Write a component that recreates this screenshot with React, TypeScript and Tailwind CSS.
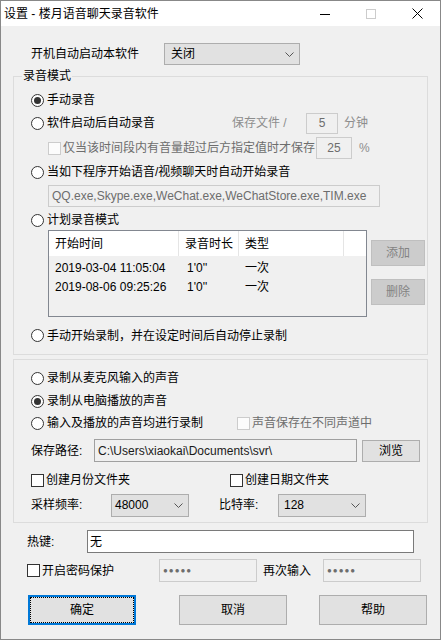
import React from "react";

type RadioProps = { checked?: boolean; label: string; className?: string };

function Radio({ checked, label, className = "" }: RadioProps) {
  return (
    <div className={`flex items-center shrink-0 ${className}`}>
      <span className="flex h-[13px] w-[13px] items-center justify-center rounded-full border border-[#333333] bg-white">
        {checked && <span className="h-[7px] w-[7px] rounded-full bg-[#333333]" />}
      </span>
      <span className="ml-[3px] whitespace-nowrap">{label}</span>
    </div>
  );
}

function Check({ label, disabled, className = "" }: { label: string; disabled?: boolean; className?: string }) {
  return (
    <div className={`flex items-center shrink-0 ${className}`}>
      <span
        className={`h-[13px] w-[13px] border ${disabled ? "border-[#cccccc] bg-[#fcfcfc]" : "border-[#333333] bg-white"}`}
      />
      <span className={`ml-[2px] whitespace-nowrap ${disabled ? "text-[#6d6d6d]" : ""}`}>{label}</span>
    </div>
  );
}

function Combo({ value, className = "" }: { value: string; className?: string }) {
  return (
    <div className={`flex shrink-0 items-center justify-between border border-[#adadad] bg-[#e1e1e1] pl-[3px] pr-[4px] ${className}`}>
      <span>{value}</span>
      <svg width="9" height="5" viewBox="0 0 9 5" className="mr-[1px]">
        <path d="M0.5 0.5 L4.5 4.5 L8.5 0.5" fill="none" stroke="#555555" strokeWidth="1" />
      </svg>
    </div>
  );
}

function Btn({ label, className = "", disabled }: { label: string; className?: string; disabled?: boolean }) {
  return (
    <div
      className={`flex shrink-0 items-center justify-center border ${
        disabled ? "border-[#bfbfbf] bg-[#cccccc] text-[#838383]" : "border-[#adadad] bg-[#e1e1e1]"
      } ${className}`}
    >
      {label}
    </div>
  );
}

const rows = [
  { start: "2019-03-04 11:05:04", len: "1'0''", type: "一次" },
  { start: "2019-08-06 09:25:26", len: "1'0''", type: "一次" },
];

export default function App() {
  return (
    <div className="flex h-[640px] w-[441px] flex-col border border-[#888888] bg-[#f0f0f0] text-[12px] leading-none text-black font-['Liberation_Sans','Noto_Sans_CJK_SC',sans-serif]">
      {/* title bar */}
      <div className="flex h-[25px] shrink-0 items-center bg-white">
        <span className="ml-[3px] mt-[1px]">设置 - 楼月语音聊天录音软件</span>
        <div className="ml-auto flex h-full">
          <div className="flex w-[46px] items-center justify-center">
            <svg width="10" height="10" viewBox="0 0 10 10">
              <path d="M0 5.5 H10" stroke="#000" strokeWidth="1" />
            </svg>
          </div>
          <div className="flex w-[46px] items-center justify-center">
            <svg width="10" height="10" viewBox="0 0 10 10">
              <rect x="0.5" y="0.5" width="9" height="9" fill="none" stroke="#cccccc" strokeWidth="1" />
            </svg>
          </div>
          <div className="flex w-[46px] items-center justify-center">
            <svg width="11" height="11" viewBox="0 0 11 11">
              <path d="M0.5 0.5 L10.5 10.5 M10.5 0.5 L0.5 10.5" stroke="#000" strokeWidth="1" />
            </svg>
          </div>
        </div>
      </div>

      {/* autostart */}
      <div className="mt-[17px] flex h-[22px] shrink-0 items-center">
        <span className="ml-[30px] w-[133px]">开机自动启动本软件</span>
        <Combo value="关闭" className="h-[22px] w-[136px] pl-[6px]" />
      </div>

      {/* group 1 */}
      <div className="relative ml-[12px] mt-[11px] flex w-[415px] shrink-0 flex-col border border-[#dcdcdc] pt-[11px]">
        <span className="absolute left-[8px] top-[-7px] bg-[#f0f0f0] px-[1px]">录音模式</span>

        <div className="flex h-[24px] items-center pl-[17px]">
          <Radio checked label="手动录音" />
        </div>

        <div className="flex h-[22px] items-center pl-[17px]">
          <Radio label="软件启动后自动录音" className="w-[201px]" />
          <span className="w-[74px] text-[#8d8d8d]">保存文件 /</span>
          <div className="flex h-[21px] w-[32px] items-center justify-center border border-[#cccccc] text-[#6d6d6d]">5</div>
          <span className="ml-[6px] text-[#8d8d8d]">分钟</span>
        </div>

        <div className="flex h-[28px] items-center pl-[34px]">
          <Check disabled label="仅当该时间段内有音量超过后方指定值时才保存" className="w-[268px]" />
          <div className="flex h-[22px] w-[36px] items-center justify-center border border-[#cccccc] text-[#6d6d6d]">25</div>
          <span className="ml-[7px] text-[#8d8d8d]">%</span>
        </div>

        <div className="flex h-[20px] items-center pl-[17px]">
          <Radio label="当如下程序开始语音/视频聊天时自动开始录音" />
        </div>

        <div className="flex h-[28px] items-center pl-[34px]">
          <div className="flex h-[22px] w-[332px] items-center border border-[#cccccc] pl-[3px] text-[#6d6d6d]">
            QQ.exe,Skype.exe,WeChat.exe,WeChatStore.exe,TIM.exe
          </div>
        </div>

        <div className="flex h-[20px] items-center pl-[17px]">
          <Radio label="计划录音模式" />
        </div>

        <div className="flex h-[87px] pl-[34px]">
          <div className="flex w-[319px] flex-col border border-[#828790] bg-[#f0f0f0]">
            <div className="flex h-[25px] shrink-0 bg-white">
              <div className="flex w-[130px] items-center border-r border-[#e5e5e5] pl-[6px]">开始时间</div>
              <div className="flex w-[60px] items-center border-r border-[#e5e5e5] pl-[6px]">录音时长</div>
              <div className="flex w-[105px] items-center border-r border-[#e5e5e5] pl-[6px]">类型</div>
              <div className="flex-1" />
            </div>
            <div className="flex flex-col pt-[2px]">
              {rows.map((r) => (
                <div key={r.start} className="flex h-[19px] items-center">
                  <span className="w-[131px] pl-[6px]">{r.start}</span>
                  <span className="w-[59px] pl-[7px]">{r.len}</span>
                  <span className="pl-[6px]">{r.type}</span>
                </div>
              ))}
            </div>
          </div>
          <div className="ml-[4px] flex flex-col pt-[10px]">
            <Btn disabled label="添加" className="h-[26px] w-[54px]" />
            <Btn disabled label="删除" className="mt-[13px] h-[26px] w-[54px]" />
          </div>
        </div>

        <div className="flex h-[37px] items-center pl-[17px]">
          <Radio label="手动开始录制，并在设定时间后自动停止录制" />
        </div>
      </div>

      {/* group 2 */}
      <div className="ml-[12px] mt-[4px] flex w-[415px] shrink-0 flex-col border border-[#dcdcdc] pt-[6px] pb-[5px]">
        <div className="flex h-[24px] items-center pl-[17px]">
          <Radio label="录制从麦克风输入的声音" />
        </div>
        <div className="flex h-[22px] items-center pl-[17px]">
          <Radio checked label="录制从电脑播放的声音" />
        </div>
        <div className="flex h-[22px] items-center pl-[17px]">
          <Radio label="输入及播放的声音均进行录制" className="w-[206px]" />
          <Check disabled label="声音保存在不同声道中" />
        </div>
        <div className="flex h-[33px] items-center pl-[17px]">
          <span className="w-[63px]">保存路径:</span>
          <div className="flex h-[23px] w-[263px] items-center border border-[#a0a0a0] pl-[3px] text-[#1a1a1a]">
            C:\Users\xiaokai\Documents\svr\
          </div>
          <Btn label="浏览" className="ml-[5px] h-[22px] w-[58px]" />
        </div>
        <div className="flex h-[26px] items-center pl-[17px]">
          <Check label="创建月份文件夹" className="w-[199px]" />
          <Check label="创建日期文件夹" />
        </div>
        <div className="flex h-[24px] items-center pl-[17px]">
          <span className="w-[80px]">采样频率:</span>
          <Combo value="48000" className="h-[23px] w-[78px]" />
          <span className="ml-[30px] w-[59px]">比特率:</span>
          <Combo value="128" className="h-[23px] w-[88px] pl-[5px]" />
        </div>
      </div>

      {/* hotkey */}
      <div className="mt-[7px] flex h-[23px] shrink-0 items-center pl-[26px]">
        <span className="w-[60px]">热键:</span>
        <div className="flex h-[23px] w-[327px] items-center border border-[#7a7a7a] bg-white pl-[2px]">无</div>
      </div>

      {/* password */}
      <div className="mt-[6px] flex h-[23px] shrink-0 items-center pl-[26px]">
        <Check label="开启密码保护" className="w-[132px]" />
        <div className="flex h-[23px] w-[98px] items-center border border-[#cccccc] pl-[3px] text-[8px] tracking-[1px] text-[#6d6d6d]">
          ●●●●●
        </div>
        <span className="ml-[6px] w-[60px]">再次输入</span>
        <div className="flex h-[23px] w-[98px] items-center border border-[#cccccc] pl-[3px] text-[8px] tracking-[1px] text-[#6d6d6d]">
          ●●●●●
        </div>
      </div>

      {/* buttons */}
      <div className="mt-[13px] flex h-[30px] shrink-0 pl-[27px]">
        <div className="flex h-[30px] w-[108px] border-2 border-[#0078d7] bg-[#e1e1e1]">
          <div className="flex flex-1 items-center justify-center border border-dotted border-black">确定</div>
        </div>
        <Btn label="取消" className="ml-[43px] h-[30px] w-[108px]" />
        <Btn label="帮助" className="ml-[32px] h-[30px] w-[108px]" />
      </div>
    </div>
  );
}
